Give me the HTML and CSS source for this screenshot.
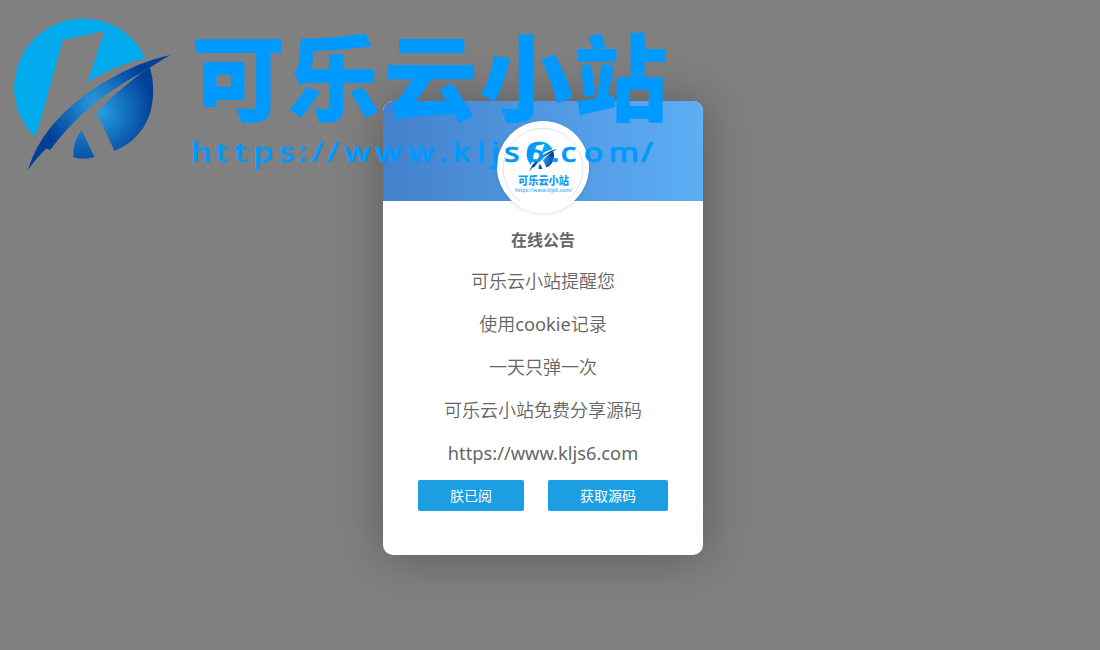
FILE: index.html
```html
<!DOCTYPE html>
<html lang="zh-CN">
<head>
<meta charset="utf-8">
<title>可乐云小站</title>
<link rel="stylesheet" href="styles.css">
</head>
<body>
<main class="page">
  <section class="notice">
    <header class="notice-head"></header>
    <div class="avatar">
      <svg viewBox="0 0 92 92" width="92" height="92">
        <path class="ring" d="M23 80A40 40 0 1 1 69 80"/>
        <use href="#mark" transform="translate(27 17) scale(.196)"/>
        <text class="mini-name" x="21" y="64" textLength="51" lengthAdjust="spacingAndGlyphs">可乐云小站</text>
        <text class="mini-url" x="18" y="70.5" textLength="57" lengthAdjust="spacingAndGlyphs">https://www.kljs6.com/</text>
      </svg>
    </div>
    <div class="notice-body">
      <h1 class="title">在线公告</h1>
      <p>可乐云小站提醒您</p>
      <p>使用<span class="latin">cookie</span>记录</p>
      <p>一天只弹一次</p>
      <p>可乐云小站免费分享源码</p>
      <p><span class="latin">https://www.kljs6.com</span></p>
    </div>
    <div class="actions">
      <button class="btn">朕已阅</button>
      <button class="btn btn-wide">获取源码</button>
    </div>
  </section>
</main>
<svg class="brand" viewBox="0 0 700 190" width="700" height="190">
  <defs>
    <radialGradient id="leaf" gradientUnits="userSpaceOnUse" cx="99" cy="112" r="56">
      <stop offset="0" stop-color="#27a0e1"/><stop offset="1" stop-color="#003e98"/>
    </radialGradient>
    <radialGradient id="swoosh" gradientUnits="userSpaceOnUse" cx="94" cy="102" r="62">
      <stop offset="0" stop-color="#2999db"/><stop offset=".9" stop-color="#003e98"/>
    </radialGradient>
    <linearGradient id="foot" x1="0" y1="0" x2="0" y2="1">
      <stop offset="0" stop-color="#1b7bc8"/><stop offset="1" stop-color="#0752a8"/>
    </linearGradient>
    <g id="mark">
      <path fill="#00aaec" d="M35.500 137.500A69 69 0 1 1 145.500 58Q113 66 87.500 82.500L104.500 31L63 40Z"/>
      <path fill="url(#leaf)" d="M96.500 112.500Q116 92 140 74L150 67.500Q156 88 151 110Q143 139 114.500 151Z"/>
      <path fill="url(#swoosh)" d="M28 170C39 133 68 104 106 81Q138 62 170 55L149 68L140 73.500Q84 104 50 150L46.500 148.500Q37 157 28 170Z"/>
      <path fill="url(#foot)" d="M81.500 130L94.500 157Q84 160 73.500 157.500Q72 143 81.500 130Z"/>
    </g>
  </defs>
  <use href="#mark"/>
  <text class="brand-name" y="113.500" x="191 287 384 479 574">可乐云小站</text>
  <text class="brand-url" transform="scale(1.2 1)" y="162" x="159.200 179.600 195.500 211 232.500 248.500 259.500 272.500 286.900 312.900 340.200 366 377 397.500 409 420 438 459 467 486.500 507 534">https://www.kljs6.com/</text>
</svg>
</body>
</html>
```
FILE: styles.css
```css
* { box-sizing: border-box; }
body {
  margin: 0;
  height: 650px;
  overflow: hidden;
  background: #808080;
  color: #666;
  font-family: "Noto Sans CJK SC", sans-serif;
}
.page {
  display: flex;
  justify-content: center;
  padding: 101px 14px 0 0;
}
.notice {
  position: relative;
  width: 320px;
  height: 454px;
  border-radius: 10px;
  background: #fff;
  box-shadow: 1px 1px 50px rgba(0, 0, 0, .3);
}
.notice-head {
  height: 100px;
  border-radius: 10px 10px 0 0;
  background: linear-gradient(to right, #4481cc, #5daef5);
}
.avatar {
  position: absolute;
  top: 20px;
  left: 114px;
  width: 92px;
  height: 92px;
  border-radius: 50%;
  background: #fff;
  box-shadow: 0 1px 4px rgba(0, 0, 0, .12);
}
.avatar svg { display: block; }
.ring { fill: none; stroke: #c9def3; stroke-width: .8; }
.mini-name { font-size: 11px; font-weight: 900; fill: #1b9cf0; }
.mini-url { font: 600 5px "Noto Sans", sans-serif; fill: #4fb4f5; }
.notice-body {
  display: flex;
  flex-direction: column;
  align-items: center;
  padding-top: 27px;
}
.title { margin: 0 0 9px; font-size: 16px; line-height: 22px; font-weight: 700; }
.notice-body p {
  margin: 0;
  height: 43px;
  font-size: 18px;
  font-weight: 350;
  line-height: 43px;
  white-space: nowrap;
}
.latin { font-family: "Noto Sans", sans-serif; font-size: 18.3px; font-weight: 400; }
.actions {
  display: flex;
  gap: 24px;
  padding-left: 35px;
  margin-top: 6px;
}
.btn {
  width: 106px;
  height: 31px;
  padding: 0;
  border: 0;
  border-radius: 2px;
  background: #1b9fe2;
  color: #fff;
  font: 400 14px/31px "Noto Sans CJK SC", sans-serif;
}
.btn-wide { width: 120px; }
.brand {
  position: absolute;
  top: 0;
  left: 0;
  pointer-events: none;
}
.brand-name {
  font: 900 94px "Noto Sans CJK SC", sans-serif;
  fill: #09f;
}
.brand-url {
  font: 500 27px "Noto Sans", sans-serif;
  fill: #09f;
  stroke: #09f;
  stroke-width: .5;
}
```
